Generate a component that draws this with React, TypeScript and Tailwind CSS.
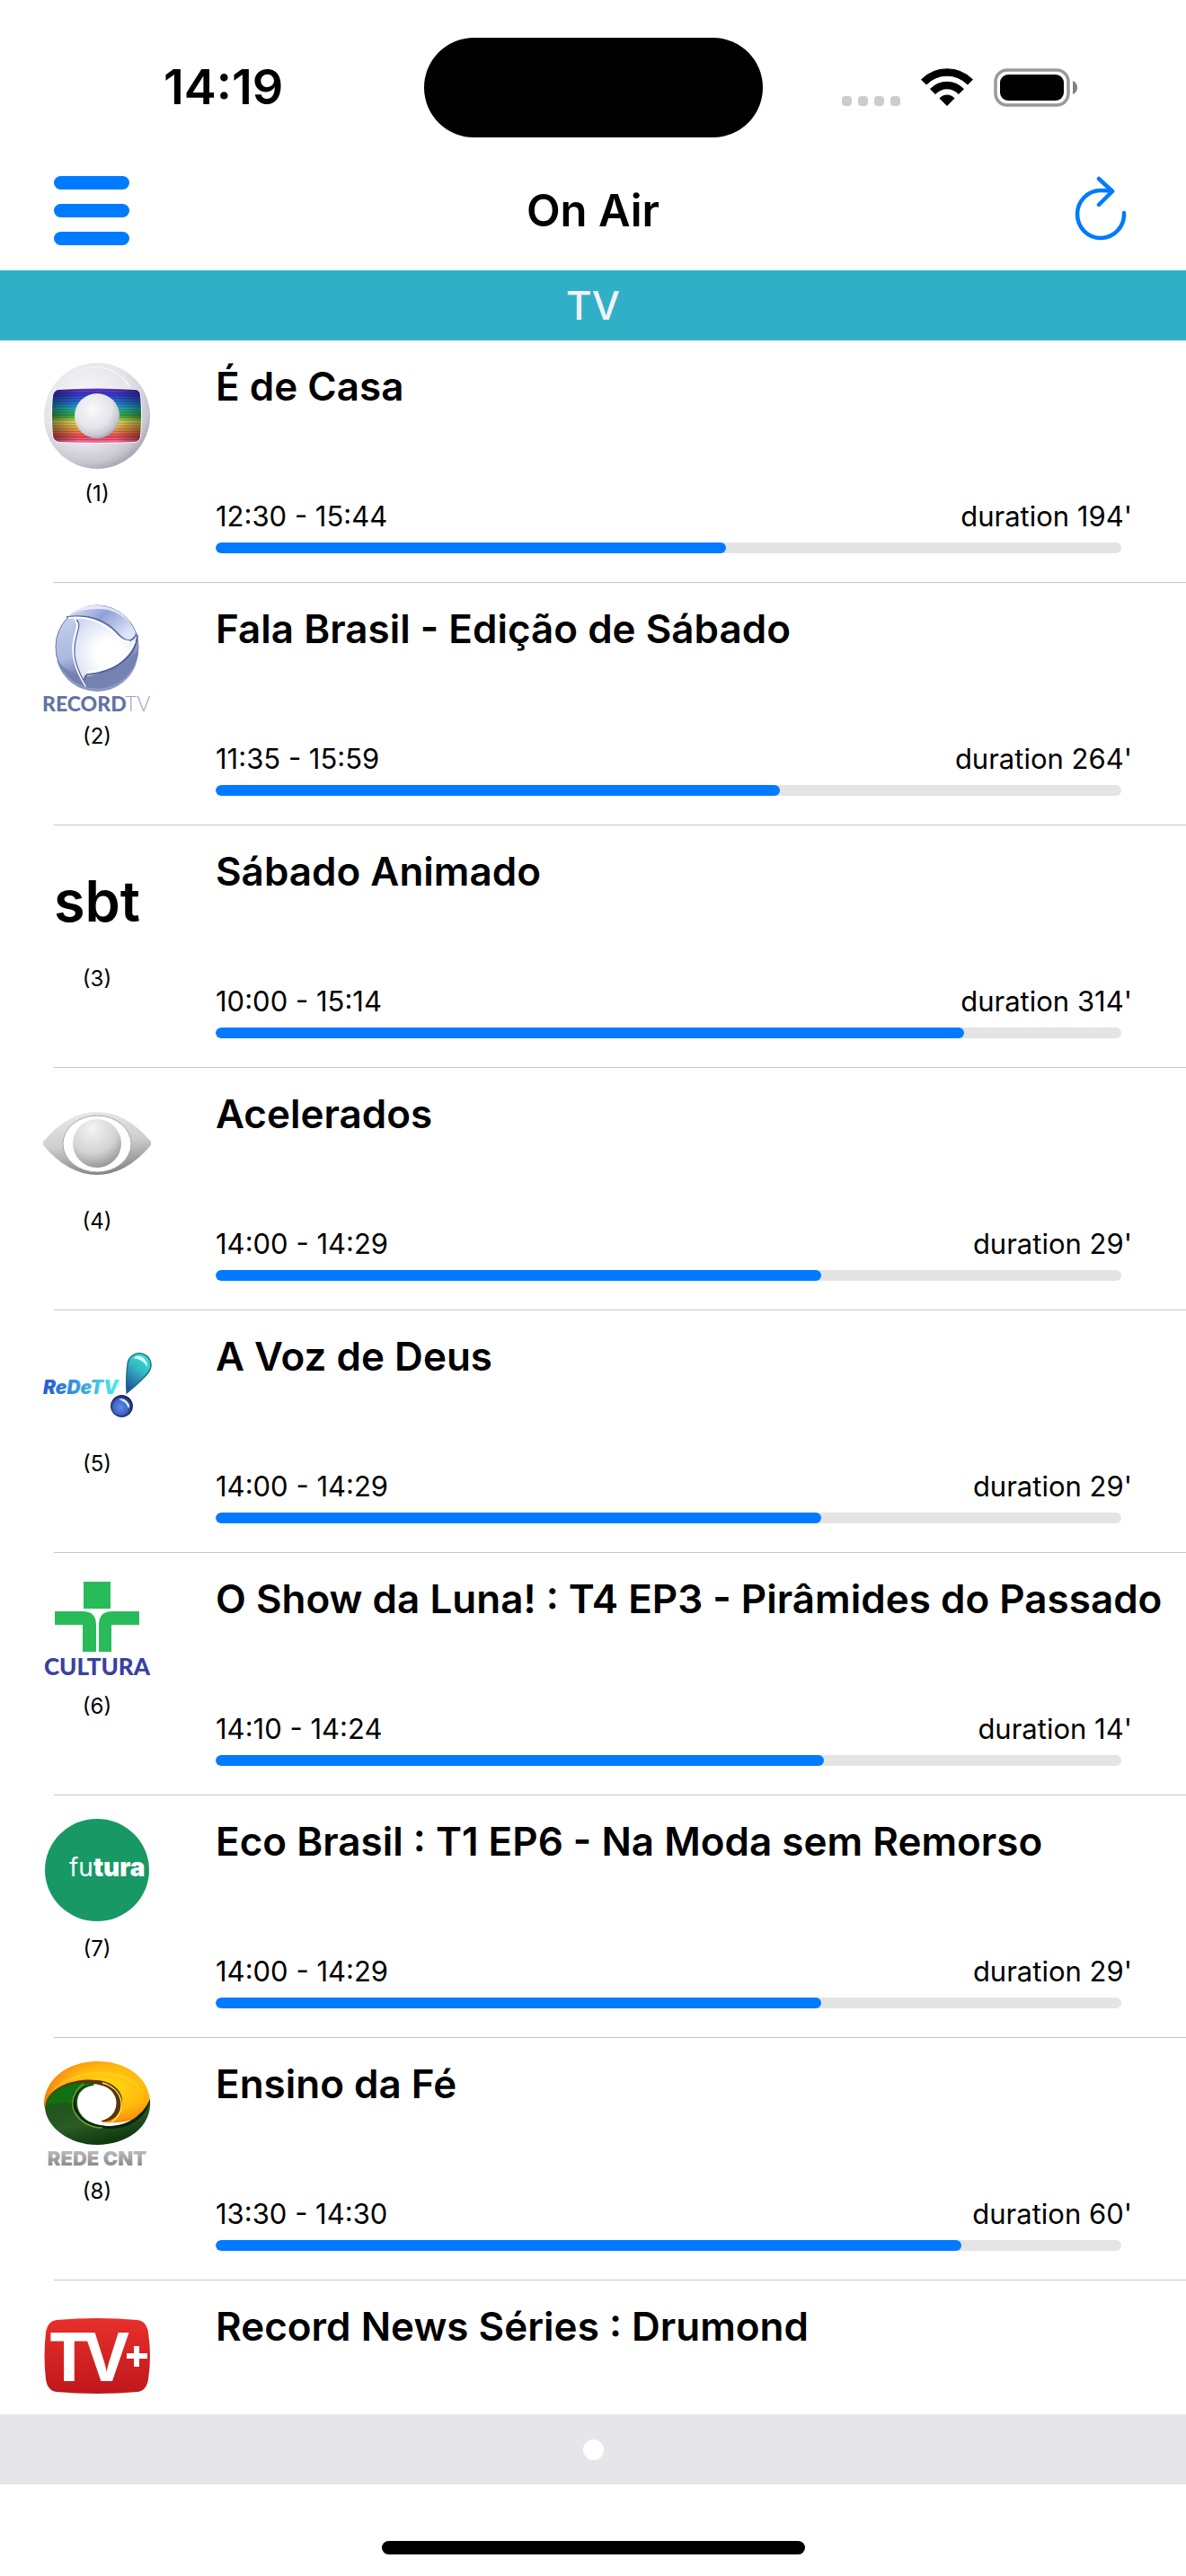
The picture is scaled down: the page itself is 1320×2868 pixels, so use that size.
import type { ReactNode } from 'react';

interface Program {
  channel: number;
  title: string;
  start?: string;
  end?: string;
  logo: ReactNode;
}

// current time in minutes since midnight
const NOW = 14 * 60 + 19.4;

const toMinutes = (time: string) => {
  const [h, m] = time.split(':').map(Number);
  return h * 60 + m;
};

function GloboLogo() {
  const lines = Array.from({ length: 19 }, (_, i) => 32 + i * 3);
  return (
    <svg viewBox="0 0 120 120" className="w-full h-full overflow-visible" aria-hidden="true">
      <defs>
        <radialGradient id="globo-ball" cx="0.4" cy="0.35" r="0.7">
          <stop offset="0" stopColor="#fafafc" />
          <stop offset="0.6" stopColor="#e4e4ea" />
          <stop offset="0.85" stopColor="#c6c6cf" />
          <stop offset="1" stopColor="#a09ba8" />
        </radialGradient>
        <linearGradient id="globo-screen" x1="0" y1="0" x2="0" y2="1">
          <stop offset="0" stopColor="#7a3fc0" />
          <stop offset="0.12" stopColor="#3a35c8" />
          <stop offset="0.25" stopColor="#2570d8" />
          <stop offset="0.38" stopColor="#25c0b8" />
          <stop offset="0.5" stopColor="#3fc037" />
          <stop offset="0.6" stopColor="#f4ec58" />
          <stop offset="0.73" stopColor="#f8a040" />
          <stop offset="0.86" stopColor="#f04a50" />
          <stop offset="1" stopColor="#f880c0" />
        </linearGradient>
        <linearGradient id="globo-shade" x1="0" y1="0" x2="1" y2="0">
          <stop offset="0" stopColor="#000" stopOpacity="0.45" />
          <stop offset="0.3" stopColor="#000" stopOpacity="0" />
          <stop offset="0.7" stopColor="#000" stopOpacity="0" />
          <stop offset="1" stopColor="#000" stopOpacity="0.45" />
        </linearGradient>
        <clipPath id="globo-clip">
          <path d="M17 31Q60 28 103 31Q108 32 108 38Q110 60 108 82Q108 88 102 89Q60 91 18 89Q12 88 11 82Q9 60 11 38Q12 32 17 31Z" />
        </clipPath>
      </defs>
      <circle cx="60" cy="60" r="59" fill="url(#globo-ball)" />
      <path d="M24 20Q60-10 92 20Q97 26 97 30Q84 8 60 6Q38 6 24 20Z" fill="#fff" opacity="0.7" />
      <path d="M17 31Q60 28 103 31Q108 32 108 38Q110 60 108 82Q108 88 102 89Q60 91 18 89Q12 88 11 82Q9 60 11 38Q12 32 17 31Z" fill="none" stroke="#f4f4f8" strokeWidth="2" />
      <g clipPath="url(#globo-clip)">
        <rect x="8" y="28" width="104" height="64" fill="url(#globo-screen)" />
        {lines.map((y) => (
          <path key={y} d={`M9 ${y}Q60 ${60 + (y - 60) * 1.06} 111 ${y}`} fill="none" stroke="#10104a" strokeOpacity="0.3" />
        ))}
        <rect x="8" y="28" width="104" height="64" fill="url(#globo-shade)" />
      </g>
      <circle cx="60" cy="60" r="25" fill="url(#globo-ball)" />
    </svg>
  );
}

function RecordLogo() {
  return (
    <svg viewBox="0 0 120 120" className="w-full h-full overflow-visible" aria-hidden="true">
      <defs>
        <linearGradient id="record-ball" x1="0.3" y1="0" x2="0.6" y2="1">
          <stop offset="0" stopColor="#c9d3ee" />
          <stop offset="0.55" stopColor="#a9b8df" />
          <stop offset="0.75" stopColor="#7584b5" />
          <stop offset="1" stopColor="#8b98c2" />
        </linearGradient>
        <linearGradient id="record-top" x1="0" y1="0" x2="1" y2="0.6">
          <stop offset="0" stopColor="#e9eefa" />
          <stop offset="0.5" stopColor="#8fa1d6" />
          <stop offset="1" stopColor="#dde5f7" />
        </linearGradient>
        <radialGradient id="record-core" cx="0.6" cy="0.55" r="0.65">
          <stop offset="0.3" stopColor="#fff" />
          <stop offset="1" stopColor="#cdd7f0" />
        </radialGradient>
      </defs>
      <circle cx="60" cy="47" r="46" fill="url(#record-ball)" stroke="#6c7aa9" strokeWidth="1" />
      <path d="M14 52A46 46 0 0 0 106 50Q98 66 84 69Q60 74 38 78Q20 72 14 58Z" fill="#707faf" opacity="0.8" />
      <path d="M27 14A46 46 0 0 1 104 36Q100 41 94 40Q86 38 78 29Q62 13 27 13Z" fill="url(#record-top)" />
      <path d="M27 14Q60 12 80 31Q90 42 97 40Q101 39 104 35Q100 58 77 70Q62 78 48 80Q46 82 45 87Q33 72 33 50Q33 38 37 28Q39 17 32 15Z" fill="url(#record-core)" />
      <path d="M26 14Q60 9 81 30Q90 41 97 40Q102 38 104 32" fill="none" stroke="#59679b" strokeWidth="1.6" />
      <path d="M28 15Q59 12 79 32Q89 42 96 41" fill="none" stroke="#fff" strokeWidth="2" />
      <path d="M105 34Q104 56 79 70Q64 77 49 78Q46 80 46 84" fill="none" stroke="#4e5b8d" strokeWidth="1.6" />
      <path d="M102 41Q97 56 76 67Q62 74 49 75" fill="none" stroke="#fff" strokeWidth="2" />
      <path d="M35 16Q40 20 37 30Q31 48 35 62Q39 78 48 91" fill="none" stroke="#fff" strokeWidth="2.4" />
      <path d="M37 17Q42 21 38 32Q33 48 36 62Q40 78 49 91" fill="none" stroke="#59679b" strokeWidth="1.2" />
      <path d="M27 12Q43 0 60 1Q84 2 98 21Q80 4 60 5Q42 5 27 12Z" fill="#eef2fb" opacity="0.8" />
      <text x="-1" y="119" className="font-['Lato'] font-black text-[23px]" fill="#6273a5">RECORD</text>
      <text x="91" y="119" className="font-['Lato'] font-light text-[23px]" fill="#9aa6c6">TV</text>
    </svg>
  );
}

function SbtLogo() {
  return (
    <div className="w-full h-full flex items-center justify-center text-[63px] leading-[72px] font-semibold">sbt</div>
  );
}

function BandLogo() {
  return (
    <svg viewBox="0 0 120 120" className="w-full h-full overflow-visible" aria-hidden="true">
      <defs>
        <linearGradient id="band-eye" x1="0.4" y1="0" x2="0.6" y2="1">
          <stop offset="0" stopColor="#e8e8e8" />
          <stop offset="0.5" stopColor="#cdcdcd" />
          <stop offset="1" stopColor="#808080" />
        </linearGradient>
        <radialGradient id="band-iris" cx="0.4" cy="0.2" r="0.85">
          <stop offset="0" stopColor="#f4f4f4" />
          <stop offset="0.6" stopColor="#d2d2d2" />
          <stop offset="1" stopColor="#8f8f8f" />
        </radialGradient>
      </defs>
      <path d="M0 58Q28 25 60 25Q92 25 120 58V62Q92 95 60 95Q28 95 0 62Z" fill="url(#band-eye)" />
      <ellipse cx="60" cy="60.500" rx="38" ry="31.500" fill="#fff" stroke="#a8a8a8" strokeWidth="1" />
      <circle cx="60" cy="60" r="27" fill="url(#band-iris)" />
    </svg>
  );
}

function RedeTvLogo() {
  return (
    <svg viewBox="0 0 120 120" className="w-full h-full overflow-visible" aria-hidden="true">
      <defs>
        <linearGradient id="redetv-text" x1="0" y1="0" x2="90" y2="0" gradientUnits="userSpaceOnUse">
          <stop offset="0" stopColor="#2458d6" />
          <stop offset="0.5" stopColor="#3fa3e2" />
          <stop offset="1" stopColor="#4dfde6" />
        </linearGradient>
        <linearGradient id="redetv-drop" x1="0.7" y1="0" x2="0.2" y2="1">
          <stop offset="0" stopColor="#36e0d0" />
          <stop offset="0.4" stopColor="#35b9c4" />
          <stop offset="1" stopColor="#234a9c" />
        </linearGradient>
        <radialGradient id="redetv-ball" cx="0.45" cy="0.55" r="0.55">
          <stop offset="0" stopColor="#5b8cf0" />
          <stop offset="0.6" stopColor="#4068c4" />
          <stop offset="1" stopColor="#16235c" />
        </radialGradient>
      </defs>
      <text x="0" y="69" className="font-['Inter'] font-black italic text-[21px]" fill="url(#redetv-text)">
        ReDeTV
      </text>
      <path d="M93 68Q92 50 94 36A13 13 0 1 1 117 45Q112 52 93 68Z" fill="url(#redetv-drop)" stroke="#1c6f83" strokeWidth="1.400" />
      <path d="M100 29Q106 24 112 29Q116 33 116 39Q111 30 100 29Z" fill="#d8fffb" />
      <circle cx="87.500" cy="82.500" r="12" fill="url(#redetv-ball)" stroke="#16225a" strokeWidth="1" />
      <path d="M84 75Q91 72 96 81Q96 84 95 85Q92 77 84 75Z" fill="#dbe8ff" />
    </svg>
  );
}

function CulturaLogo() {
  return (
    <svg viewBox="0 0 120 120" className="w-full h-full overflow-visible" aria-hidden="true">
      <g fill="#29bb5a">
        <rect x="45" y="8" width="30" height="30" />
        <path d="M13 41H44Q59 41 59 56V86H44V56H13Z" />
        <path d="M107 41H77Q62 41 62 56V86H76V56H107Z" />
      </g>
      <text x="60" y="112" textAnchor="middle" className="font-['Lato'] font-black text-[26px]" fill="#3a40a2">CULTURA</text>
    </svg>
  );
}

function FuturaLogo() {
  return (
    <svg viewBox="0 0 120 120" className="w-full h-full overflow-visible" aria-hidden="true">
      <ellipse cx="60" cy="59" rx="58" ry="57" fill="#179865" />
      <text x="29" y="66" className="font-['Inter'] text-[28px]" fill="#fff">
        fu<tspan className="font-black">tura</tspan>
      </text>
    </svg>
  );
}

function CntLogo() {
  return (
    <svg viewBox="0 0 120 120" className="w-full h-full overflow-visible" aria-hidden="true">
      <defs>
        <radialGradient id="cnt-orange" cx="0.6" cy="0.45" r="0.6">
          <stop offset="0" stopColor="#ffdc10" />
          <stop offset="0.6" stopColor="#ffb90c" />
          <stop offset="1" stopColor="#f5800f" />
        </radialGradient>
        <linearGradient id="cnt-green" x1="0" y1="0" x2="0.4" y2="1">
          <stop offset="0" stopColor="#0d7a12" />
          <stop offset="0.4" stopColor="#1f561c" />
          <stop offset="0.7" stopColor="#2b5a26" />
          <stop offset="1" stopColor="#123c10" />
        </linearGradient>
        <linearGradient id="cnt-text" x1="0" y1="0" x2="0" y2="1">
          <stop offset="0" stopColor="#c9c9c9" />
          <stop offset="1" stopColor="#7c7c7c" />
        </linearGradient>
      </defs>
      <path d="M1 54C-1 22 28 2 60 2C92 2 120 20 119 50C112 64 98 72 66 70V66L82 48L60 26C30 28 10 38 1 54Z" fill="url(#cnt-orange)" />
      <path d="M8 38C24 10 94 2 112 38C92 8 34 10 8 38Z" fill="#ffe14a" opacity="0.350" />
      <path d="M2 54C4 34 26 24 58 24L56 29C44 30 38 38 38 48C38 64 54 75 76 74C100 73 114 60 119 44C122 76 92 95 60 95C30 95 4 76 2 54Z" fill="url(#cnt-green)" />
      <path d="M1 54C4 30 36 20 60 23C76 24 90 34 88 50C87 62 76 70 65 69L64 64C75 64 82 56 81 47C80 36 70 28 56 27C32 23 10 32 2 49Z" fill="#5a3505" />
      <path d="M5 48C12 33 36 25 55 27C40 31 35 40 36 50Q20 46 3 50Z" fill="#0f7312" opacity="0.850" />
      <path d="M56 28C39 31 34 42 37 53C40 66 54 74 76 74C100 72 113 58 119 44C117 62 98 78 72 77C48 76 33 64 33 49C33 38 42 29 56 28Z" fill="#09250a" />
      <path d="M45 27C34 35 29 50 36 60C42 70 54 76 66 76" fill="none" stroke="#6ea22e" strokeWidth="1.500" />
      <path d="M66 26C88 32 95 55 76 70" fill="none" stroke="#ffe55a" strokeWidth="1.500" />
      <ellipse cx="60.500" cy="48.500" rx="21" ry="20" fill="#fff" />
      <text x="60" y="118" textAnchor="middle" className="font-['Inter'] font-black text-[22px]" fill="url(#cnt-text)">REDE CNT</text>
    </svg>
  );
}

function TvPlusLogo() {
  return (
    <svg viewBox="0 0 120 120" className="w-full h-full overflow-visible" aria-hidden="true">
      <defs>
        <linearGradient id="tvplus" x1="0" y1="0" x2="0" y2="1">
          <stop offset="0" stopColor="#e8302a" />
          <stop offset="1" stopColor="#bf171d" />
        </linearGradient>
      </defs>
      <path d="M15 20Q60 16 105 20Q115 21 117 34Q121 60 117 86Q115 99 105 100Q60 104 15 100Q5 99 3 86Q0 60 3 34Q5 21 15 20Z" fill="url(#tvplus)" />
      <g fill="#fff" className="font-['Noto_Sans'] font-bold text-[76px]">
        <text x="7" y="88">T</text>
        <text x="46" y="88">V</text>
      </g>
      <path d="M93 57H101V49H107V57H116V63H107V72H101V63H93Z" fill="#fff" />
    </svg>
  );
}

const programs: Program[] = [
  { channel: 1, title: 'É de Casa', start: '12:30', end: '15:44', logo: <GloboLogo /> },
  { channel: 2, title: 'Fala Brasil - Edição de Sábado', start: '11:35', end: '15:59', logo: <RecordLogo /> },
  { channel: 3, title: 'Sábado Animado', start: '10:00', end: '15:14', logo: <SbtLogo /> },
  { channel: 4, title: 'Acelerados', start: '14:00', end: '14:29', logo: <BandLogo /> },
  { channel: 5, title: 'A Voz de Deus', start: '14:00', end: '14:29', logo: <RedeTvLogo /> },
  { channel: 6, title: 'O Show da Luna! : T4 EP3 - Pirâmides do Passado', start: '14:10', end: '14:24', logo: <CulturaLogo /> },
  { channel: 7, title: 'Eco Brasil : T1 EP6 - Na Moda sem Remorso', start: '14:00', end: '14:29', logo: <FuturaLogo /> },
  { channel: 8, title: 'Ensino da Fé', start: '13:30', end: '14:30', logo: <CntLogo /> },
  { channel: 9, title: 'Record News Séries : Drumond', logo: <TvPlusLogo /> },
];

function StatusBar() {
  return (
    <div className="grid grid-cols-[1fr_auto_1fr] items-center h-[194px] shrink-0">
      <span className="pl-[182px] text-[54px] leading-[60px] font-semibold">14:19</span>
      <div className="w-[377px] h-[111px] rounded-full bg-black" />
      <div className="flex items-center justify-end gap-[23px] pr-[121px]">
        <div className="flex gap-[7px] pt-[30px]">
          <span className="w-[11px] h-[11px] rounded-[4px] bg-[#cccccc]" />
          <span className="w-[11px] h-[11px] rounded-[4px] bg-[#cccccc]" />
          <span className="w-[11px] h-[11px] rounded-[4px] bg-[#cccccc]" />
          <span className="w-[11px] h-[11px] rounded-[4px] bg-[#cccccc]" />
        </div>
        <svg className="w-[58px] h-[43px]" viewBox="0 0 58 43" fill="none" stroke="#000">
          <path d="M3 15.500Q14 4.500 29 4.500T55 15.500" strokeWidth="8.500" />
          <path d="M13 26Q20 19 29 19T45 26" strokeWidth="8.500" />
          <path d="M29 42L20.500 33.500Q24 29.500 29 29.500T37.500 33.500Z" fill="#000" stroke="none" />
        </svg>
        <svg className="w-[93px] h-[43px]" viewBox="0 0 93 43">
          <rect x="2" y="2" width="81" height="39" rx="13" fill="none" stroke="#999" strokeWidth="3.500" />
          <rect x="7" y="7" width="71" height="29" rx="9" fill="#000" />
          <path d="M88 14Q93 16 93 21.500T88 29Z" fill="#808080" />
        </svg>
      </div>
    </div>
  );
}

function NavBar() {
  return (
    <header className="grid grid-cols-[1fr_auto_1fr] items-center h-[107px] shrink-0 px-[60px] pb-[26px]">
      <button aria-label="Menu" className="flex flex-col gap-4 w-[84px]">
        <span className="w-full h-[15px] rounded-full bg-[#007aff]" />
        <span className="w-full h-[15px] rounded-full bg-[#007aff]" />
        <span className="w-full h-[15px] rounded-full bg-[#007aff]" />
      </button>
      <h1 className="text-[49px] leading-[60px] font-semibold">On Air</h1>
      <button aria-label="Refresh" className="justify-self-end">
        <svg className="w-[70px] h-[78px]" viewBox="0 0 70 78" fill="none" stroke="#007aff" strokeWidth="4.500" strokeLinecap="round" strokeLinejoin="round">
          <path d="M61 41A26 26.500 0 1 1 35 16Q42 16 48 17" />
          <path d="M33 3L48 17L33 32" />
        </svg>
      </button>
    </header>
  );
}

function ProgramRow({ program }: { program: Program }) {
  const { channel, title, start, end, logo } = program;
  const duration = start && end ? toMinutes(end) - toMinutes(start) : 0;
  const progress = start && duration ? ((NOW - toMinutes(start)) / duration) * 100 : 0;

  return (
    <li className="shrink-0">
      <div className="flex h-[269px] pt-6 pl-12">
        <div className="flex flex-col items-center gap-[13px] w-[120px] mr-[72px] shrink-0">
          <div className="w-[120px] h-[120px]">{logo}</div>
          <span className="text-[24px] leading-[28px]">({channel})</span>
        </div>
        <div className="flex-1 min-w-0">
          <h2 className="text-[44px] leading-[54px] font-semibold whitespace-nowrap">{title}</h2>
          {start && end && (
            <>
              <div className="flex justify-between mt-[100px] pr-[60px] text-[31px] leading-[36px]">
                <span>{start} - {end}</span>
                <span>duration {duration}'</span>
              </div>
              <div className="mt-[11px] pr-[72px]">
                <div
                  role="progressbar"
                  aria-label={title}
                  aria-valuenow={Math.round(progress)}
                  className="h-3 rounded-full bg-[#e4e4e4] overflow-hidden"
                >
                  <div className="h-full rounded-full bg-[#007aff]" style={{ width: `${progress}%` }} />
                </div>
              </div>
            </>
          )}
        </div>
      </div>
      <div className="ml-[60px] h-px bg-[#c6c6c8]" />
    </li>
  );
}

export default function App() {
  return (
    <div className="flex flex-col h-screen bg-white text-black font-['Inter',sans-serif]">
      <StatusBar />
      <NavBar />
      <div className="flex items-center justify-center h-[78px] shrink-0 bg-[#30b0c7] text-[#f2f2f7] text-[44px] leading-[52px] font-medium">
        TV
      </div>
      <ul className="flex-1 min-h-0 overflow-hidden">
        {programs.map((program) => (
          <ProgramRow key={program.channel} program={program} />
        ))}
      </ul>
      <div className="flex items-center justify-center h-[78px] shrink-0 bg-[#e5e5ea]">
        <span className="w-[23px] h-[23px] rounded-full bg-white" />
      </div>
      <footer className="flex items-end justify-center h-[102px] shrink-0 pb-6">
        <div className="w-[471px] h-[15px] rounded-full bg-black" />
      </footer>
    </div>
  );
}
